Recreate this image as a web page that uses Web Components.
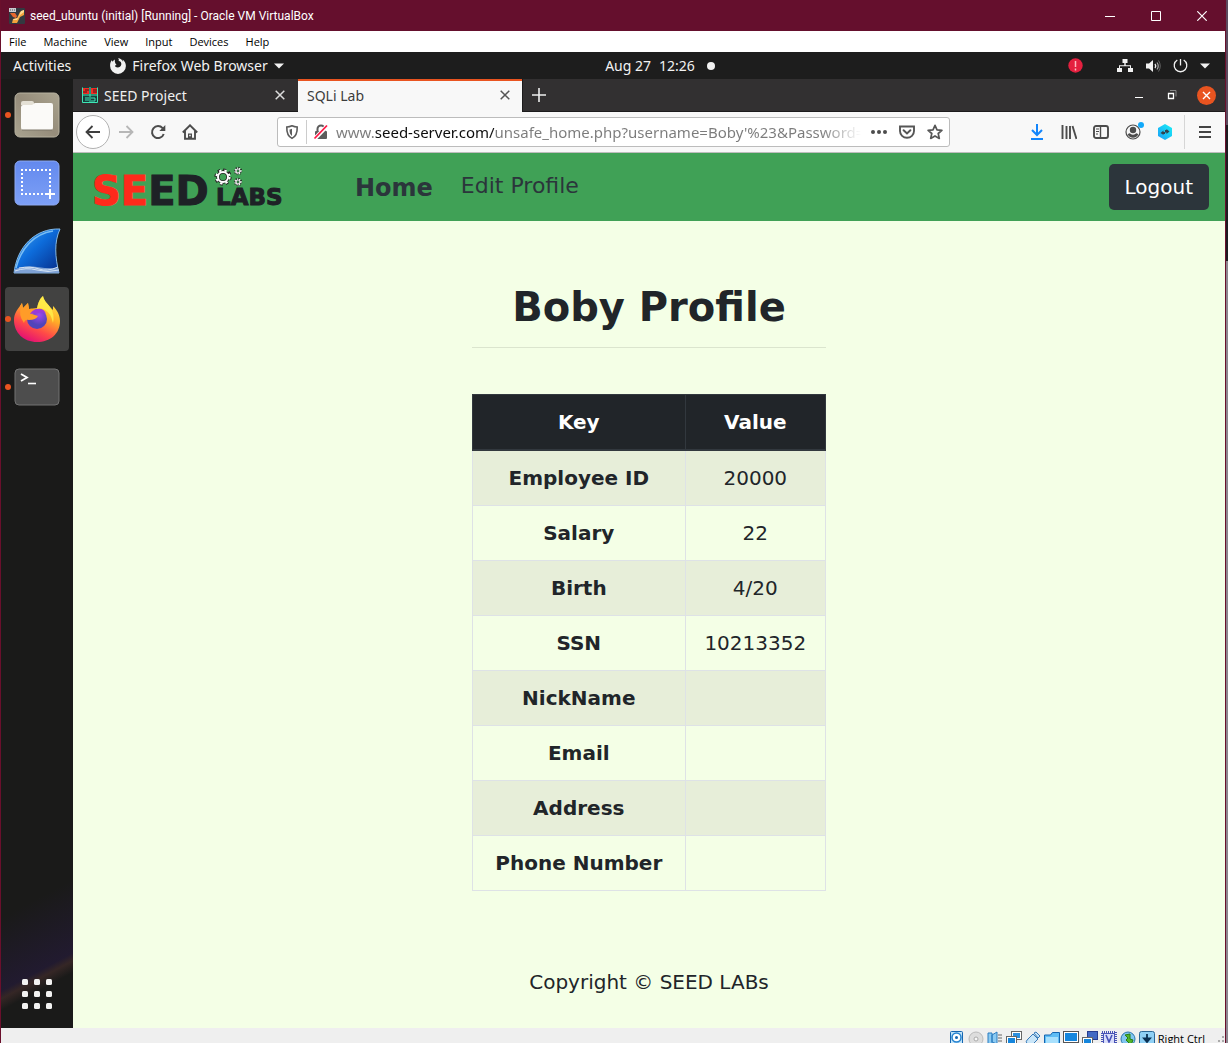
<!DOCTYPE html>
<html lang="en">
<head>
<meta charset="utf-8">
<title>SQLi Lab</title>
<style>
  html, body { margin: 0; height: 100%; }
  body { background: linear-gradient(#5b4a5e 0 12%, #1c1c22 12% 25%, #8d8791 25%); font-family: "Open Sans", "Noto Sans", sans-serif; }
</style>
</head>
<body>
<vm-window>
  <vm-titlebar slot="title">seed_ubuntu (initial) [Running] - Oracle VM VirtualBox</vm-titlebar>
  <vm-menubar slot="menu"></vm-menubar>
  <gnome-desktop>
    <gnome-topbar slot="top"></gnome-topbar>
    <gnome-dock slot="dock"></gnome-dock>
    <firefox-window>
      <firefox-tabs slot="tabs"></firefox-tabs>
      <firefox-toolbar slot="toolbar"></firefox-toolbar>
      <seed-navbar></seed-navbar>
      <seed-profile name="Boby"></seed-profile>
    </firefox-window>
  </gnome-desktop>
  <vm-statusbar slot="status"></vm-statusbar>
</vm-window>
<script>
const BASE = `
  *, *::before, *::after { box-sizing: border-box; }
  :host { display: block; box-sizing: border-box; }
  button { font: inherit; color: inherit; background: none; border: 0; padding: 0; margin: 0; display: flex; align-items: center; justify-content: center; }
  a { color: inherit; text-decoration: none; }
  svg { display: block; flex: none; }
`;
function component(tag, css, html) {
  customElements.define(tag, class extends HTMLElement {
    constructor() {
      super();
      this.attachShadow({ mode: "open" });
      const body = typeof html === "function" ? html(this) : html;
      this.shadowRoot.innerHTML = `<style>${BASE}${css}</style>${body}`;
    }
  });
}

component("vm-window", `
  :host { display: flex; flex-direction: column; height: 100vh; min-height: 1043px; margin-right: 2px; border: solid #6a0f2c; border-width: 0 1px; overflow: hidden; }
  main { flex: 1; min-height: 0; display: flex; flex-direction: column; }
`, `<slot name="title"></slot><slot name="menu"></slot><main><slot></slot></main><slot name="status"></slot>`);

component("vm-titlebar", `
  :host { display: flex; align-items: center; height: 31px; padding-left: 8px; background: #650f2d; color: #fff; }
  .text { flex: 1; padding-left: 5px; white-space: nowrap; font-family: Roboto, sans-serif; font-size: 12px; line-height: 16px; }
  button { width: 46px; height: 31px; }
`, `
  <svg width="16" height="16" viewBox="0 0 16 16"><rect width="16" height="16" rx="1" fill="#333940"/><path d="M0 0h7v4H0z" fill="#c9cbd0"/><path d="M1 2h5" stroke="#555" stroke-dasharray="1 1"/><path d="M1 5h5l2 3-1 2-3-1z" fill="#e8692f"/><path d="M15 2v5l-4 2-3 6H3l1-4 4-1 3-6z" fill="#f4a23c"/><path d="M15 2v2l-4 3-3 5H4l1-1 4-1 3-7z" fill="#ffdb93"/></svg>
  <span class="text"><slot></slot></span>
  <button aria-label="Minimize"><svg width="10" height="10"><path d="M0 5.500h10" stroke="#fff"/></svg></button>
  <button aria-label="Maximize"><svg width="10" height="10"><path d="M.5.5h9v9h-9z" fill="none" stroke="#fff"/></svg></button>
  <button aria-label="Close"><svg width="10" height="10"><path d="M.3.3l9.400 9.400M9.700.3L.3 9.700" stroke="#fff" stroke-width="1.200"/></svg></button>`);

component("vm-menubar", `
  :host { height: 21px; background: #fff; color: #000; }
  nav { display: flex; gap: 17px; padding: 0 8px; font-size: 11px; line-height: 21px; }
`, `<nav>${["File", "Machine", "View", "Input", "Devices", "Help"].map(t => `<button>${t}</button>`).join("")}</nav>`);

component("gnome-desktop", `
  :host { flex: 1; display: flex; flex-direction: column; min-height: 0; }
  .row { flex: 1; display: flex; min-height: 0; }
`, `<slot name="top"></slot><div class="row"><slot name="dock"></slot><slot></slot></div>`);

component("gnome-topbar", `
  :host { display: grid; grid-template-columns: 8fr auto 7fr; align-items: center; height: 27px; padding: 0 12px; background: #1d1d1d; color: #f2f2f2; font-family: "Noto Sans"; font-size: 14px; line-height: 27px; white-space: nowrap; }
  div { display: flex; align-items: center; }
  .app { margin-left: 39px; gap: 6px; }
  .clock { gap: 8px; }
  .right { justify-content: space-between; padding-left: 12px; }
  .tray { gap: 12px; padding-right: 3px; }
  .alert { margin-right: 22px; }
`, `
  <div><button>Activities</button>
    <button class="app">
      <svg width="16" height="16" viewBox="0 0 16 16"><path d="M8 0c1 1 1 2 .6 3 2 .2 3 1.600 2.700 3.500-.3 2-2 3-3.500 3C6 9.500 5 8.500 5 7.500l1.600-.6-1-1.200C5 4.500 4.500 3 5 1.500 3.700 2 3 3 2.800 3.800L1.600 2.200C.4 4 0 6 .1 8a7.900 7.900 0 0 0 15.800 0c0-3-1.300-5-3.400-6.600.5 1 .7 1.600.6 2.300C12 1.500 10.500.3 8 0z" fill="#f2f2f2"/></svg>
      Firefox Web Browser
      <svg width="10" height="6"><path d="M0 .5h10L5 5.500z" fill="#f2f2f2"/></svg>
    </button></div>
  <button class="clock"><span>Aug 27</span><span>12:26</span></button>
  <div class="right"><svg width="8" height="8"><circle cx="4" cy="4" r="4" fill="#f2f2f2"/></svg>
    <div class="tray">
      <svg class="alert" width="15" height="15" viewBox="0 0 15 15"><circle cx="7.500" cy="7.500" r="7.200" fill="#e4203f"/><path d="M7.500 3v6M7.500 10.500v2" stroke="#ffb9c0" stroke-width="1.500"/></svg>
      <svg width="16" height="14" viewBox="0 0 16 14"><path d="M5.500 0h5v4H8.700v2.200H14V9h2v4h-5V9h2V7.200H3V9h2v4H0V9h2V6.200h5.300V4H5.500z" fill="#f2f2f2"/></svg>
      <svg width="16" height="14" viewBox="0 0 16 14"><path d="M1 4.500h3L8 1v12L4 9.500H1z" fill="#f2f2f2"/><path d="M10 5q1.500 2 0 4" fill="none" stroke="#f2f2f2" stroke-width="1.300"/><path d="M12 3.500q2.500 3.500 0 7" fill="none" stroke="#aaa" stroke-width="1.200"/><path d="M13.500 1.500q3.500 5.500 0 11" fill="none" stroke="#666"/></svg>
      <svg width="15" height="15" viewBox="0 0 15 15"><path d="M4.300 2A6.300 6.300 0 1 0 10.700 2M7.500 1v6.500" fill="none" stroke="#f2f2f2" stroke-width="1.300"/></svg>
      <svg width="10" height="6"><path d="M0 .5h10L5 5.500z" fill="#f2f2f2"/></svg>
    </div></div>`);

component("gnome-dock", `
  :host { flex: none; width: 72px; display: flex; flex-direction: column; align-items: center; justify-content: space-between; padding: 4px 4px 2px;
    background: linear-gradient(152deg, transparent 25%, #2b1b4c70 62%, #4a302f90 66%, transparent 72%) bottom / 100% 160px no-repeat, #1a1a19; }
  div { display: flex; flex-direction: column; gap: 4px; }
  button { position: relative; width: 64px; height: 64px; border-radius: 4px; }
  .active { background: #424241; }
  .running::before { content: ""; position: absolute; left: 0; width: 6px; height: 6px; border-radius: 3px; background: #e95420; }
`, `
  <div>
    <button class="running" aria-label="Files"><svg width="46" height="46" viewBox="0 0 46 46"><defs><linearGradient id="f" x1="0" y1="1" x2="1" y2="0"><stop stop-color="#aaa490"/><stop offset=".5" stop-color="#958c7a"/><stop offset="1" stop-color="#aba591"/></linearGradient></defs><rect x="1" y="1" width="44" height="44" rx="5" fill="url(#f)" stroke="#b6b19f"/><path d="M7 13v-2q0-2 2-2h9q2 0 2 2l3 3z" fill="#e4e0d5"/><path d="M7 15q0-2 2-2h9l3-2h16q2 0 2 2v22q0 3-2 3H9q-2 0-2-3z" fill="#fbfaf8"/><path d="M8 38h30" stroke="#7d7768"/></svg></button>
    <button aria-label="Screenshot"><svg width="46" height="46" viewBox="0 0 46 46"><defs><linearGradient id="s" x2="0" y2="1"><stop stop-color="#6389ee"/><stop offset="1" stop-color="#7da0f6"/></linearGradient></defs><rect x="1" y="1" width="44" height="44" rx="5" fill="url(#s)" stroke="#8ea9f2"/><path d="M7 10h30M7 34h24M8 13v20M36 13v16" stroke="#fff" stroke-width="2" stroke-dasharray="2 2"/><path d="M31 34h10M36 29v10" stroke="#fff" stroke-width="2"/></svg></button>
    <button aria-label="Wireshark"><svg width="48" height="46" viewBox="0 0 48 46"><defs><linearGradient id="w" x1="0" x2="1" y2="1"><stop stop-color="#45a5f0"/><stop offset=".45" stop-color="#0d6cdb"/><stop offset="1" stop-color="#062a86"/></linearGradient></defs><path d="M1 45C4 19 22 0 47 1c-6 13-5 28-1 44z" fill="url(#w)" stroke="#85b9e4"/><path d="M3 40C8 20 21 6 40 3" fill="none" stroke="#78bdf4" stroke-width="1.500"/><path d="M2 41q10-4 22-2t21 1l1 5H1z" fill="#7fa2d5"/><path d="M2 43q11-4 22-1t22 0M6 40q12-2 20 1t19-2" fill="none" stroke="#d3e2f4"/></svg></button>
    <button class="running active" aria-label="Firefox"><svg width="48" height="48" viewBox="0 0 48 48"><defs><linearGradient id="x" x1=".8" y1="0" x2=".3" y2="1"><stop stop-color="#fff14a"/><stop offset=".4" stop-color="#ffad27"/><stop offset=".7" stop-color="#ff4b47"/><stop offset="1" stop-color="#e20c77"/></linearGradient><radialGradient id="p" cx=".6" cy=".3"><stop stop-color="#a347ed"/><stop offset="1" stop-color="#5144ba"/></radialGradient></defs><path d="M24 47C11 47 1 38 1 25c0-6 3-10 6-14l2-3 1 5 5-5 1 6 8-1c1-5 3-10 6-12 1 5 4 7 7 11l3 3v-4c4 4 7 9 7 15 0 13-10 21-23 21z" fill="url(#x)"/><circle cx="24" cy="24" r="10" fill="url(#p)"/><path d="M7 11l2-3 1 5 5-5 1 6q5-1 8 2l-5 3 6 2q-2 4-9 4-4-1-5 3-6-8-3-17z" fill="#ff9c28"/><path d="M24 14q7-1 9 5-4-3-8-1l-8 1q2-4 7-5z" fill="#9a3ad8"/><path d="M30 1c1 5 4 7 7 11q5 7 3 16-2-10-8-13-5-3-8-1 1-8 6-13z" fill="#fff04b" opacity=".8"/></svg></button>
    <button class="running" aria-label="Terminal"><svg width="46" height="38" viewBox="0 0 46 38"><rect x="1" y="1" width="44" height="36" rx="4" fill="#4d4d4d" stroke="#737373"/><path d="M7 6l6 3.500L7 13" fill="none" stroke="#fff" stroke-width="1.800"/><path d="M14 15.500h8" stroke="#fff" stroke-width="1.600"/></svg></button>
  </div>
  <button aria-label="Show Applications"><svg width="30" height="30" viewBox="0 0 30 30" fill="#f3f3f2">${[0, 12, 24].map(y => [0, 12, 24].map(x => `<rect x="${x}" y="${y}" width="6" height="6" rx="1.500"/>`).join("")).join("")}</svg></button>`);

component("firefox-window", `
  :host { flex: 1; min-width: 0; display: flex; flex-direction: column; background: #f4ffe6; }
`, `<slot name="tabs"></slot><slot name="toolbar"></slot><slot></slot>`);

const cross = (c) => `<svg width="10" height="10"><path d="M.7.7l8.600 8.600M9.300.7L.7 9.300" stroke="${c}" stroke-width="1.500"/></svg>`;
component("firefox-tabs", `
  :host { display: flex; height: 33px; background: #323031; color: #f0f0f0; font-family: "Noto Sans"; font-size: 14px; }
  .tab { display: flex; align-items: center; width: 225px; padding: 0 13px 0 9px; gap: 6px; border-bottom: 1px solid #1c1b1c; }
  .tab.on { width: 224px; background: #f8f8f8; color: #3c3c3c; border-bottom: 0; border-top: 2px solid #e95420; padding: 0 12px 3px 9px; }
  .tab span { flex: 1; }
  .rest { flex: 1; display: flex; align-items: center; justify-content: space-between; border-bottom: 1px solid #1c1b1c; border-left: 1px solid #1c1b1c; padding: 0 9px; }
  .win { display: flex; align-items: center; gap: 24px; }
  .close { width: 19px; height: 19px; border-radius: 10px; background: #e95420; margin-left: -4px; }
`, `
  <div class="tab"><svg width="16" height="16" viewBox="0 0 16 16"><rect width="16" height="16" fill="#173f3c"/><path d="M1 1h6v6H1zM9 1h6v6H9z" fill="#f02c24"/><path d="M3 3h4M1 5h4M11 3h4M11 5h4" stroke="#4c1516"/><path d="M.5.5v15h15V.500M8 0v16M0 8h16M3 11h4M3 13h4M9 11h4v3H9" fill="none" stroke="#3ee6b5"/></svg><span>SEED Project</span><button aria-label="Close tab">${cross("#ddd")}</button></div>
  <div class="tab on"><span>SQLi Lab</span><button aria-label="Close tab">${cross("#555")}</button></div>
  <div class="rest"><button aria-label="New tab"><svg width="14" height="14"><path d="M0 7h14M7 0v14" stroke="#eee" stroke-width="1.600"/></svg></button>
    <div class="win">
      <button aria-label="Minimize"><svg width="8" height="10"><path d="M0 7.500h8" stroke="#fff"/></svg></button>
      <button aria-label="Restore"><svg width="10" height="10"><path d="M1.500 3.500h5v5h-5z" fill="none" stroke="#fff" stroke-width="1.300"/><path d="M3 .5h6v6" fill="none" stroke="#888"/></svg></button>
      <button class="close" aria-label="Close"><svg width="9" height="9"><path d="M1 1l7 7M8 1L1 8" stroke="#fff" stroke-width="1.400"/></svg></button>
    </div></div>`);

component("firefox-toolbar", `
  :host { display: flex; align-items: center; height: 41px; padding-left: 3px; background: #f8f8f8; border-bottom: 1px solid #bdbdbd; color: #4c4c4c; }
  button { width: 32px; height: 34px; }
  .back { width: 34px; border: 1px solid #b1b1b1; border-radius: 17px; background: #fff; }
  .url { flex: 1; min-width: 0; display: flex; align-items: center; height: 30px; margin: 0 71px; padding-left: 6px; border: 1px solid #bcbcbc; border-radius: 3px; background: #fff; }
  .shield { width: 16px; }
  .lock { width: 28px; height: 24px; margin-left: 6px; border-left: 1px solid #ccc; }
  .url .act { width: 28px; }
  input { flex: 1; min-width: 0; height: 28px; border: 0; padding: 0; margin: 0 4px 0 2px; outline: 0; font: 15px/28px "Noto Sans";
    background: linear-gradient(90deg, #7b7b7b 39px, #0c0c0c 39px 158px, #7b7b7b 158px calc(100% - 40px), #7b7b7b00 100%); -webkit-background-clip: text; background-clip: text; -webkit-text-fill-color: transparent; }
  .menu { border-left: 1px solid #d6d6d6; width: 41px; margin-left: 3px; }
`, `
  <button class="back" aria-label="Back"><svg width="16" height="16" viewBox="0 0 16 16"><path d="M15 8H1.500M7.500 2l-6 6 6 6" fill="none" stroke="#3f3f3f" stroke-width="1.800"/></svg></button>
  <button aria-label="Forward"><svg width="16" height="16" viewBox="0 0 16 16"><path d="M1 8h13.500M8.500 2l6 6-6 6" fill="none" stroke="#b7b7b7" stroke-width="1.800"/></svg></button>
  <button aria-label="Reload"><svg width="16" height="16" viewBox="0 0 16 16"><path d="M12.600 4.200A6 6 0 1 0 13.700 10" fill="none" stroke="#4c4c4c" stroke-width="2"/><path d="M15.300 1v6H9.300z" fill="#4c4c4c"/></svg></button>
  <button aria-label="Home"><svg width="16" height="16" viewBox="0 0 16 16"><path d="M.8 8.500L8 1.300l7.200 7.200M3 7v7.800h10V7" fill="none" stroke="#4c4c4c" stroke-width="1.900"/><path d="M6 15V9.500h4V15z" fill="#4c4c4c"/><path d="M7.200 10.700h1.500v1.500H7.200z" fill="#f8f8f8"/></svg></button>
  <div class="url">
    <button class="shield" aria-label="Tracking protection"><svg width="14" height="16" viewBox="0 0 14 16"><path d="M7 1.800Q4.500 3 1.800 3C1.600 8 2.500 12.200 7 14.400 11.500 12.200 12.400 8 12.200 3Q9.500 3 7 1.800z" fill="none" stroke="#5c5c5c" stroke-width="1.600"/><path d="M7 4.800q-1 .6-2.500.7C4.500 8.500 5 10.700 7 12z" fill="#5c5c5c"/></svg></button>
    <button class="lock" aria-label="Connection is not secure"><svg width="16" height="16" viewBox="0 0 16 16"><path d="M4.500 7V5a3.500 3.500 0 0 1 7 0v2" fill="none" stroke="#5c5c5c" stroke-width="2"/><rect x="2" y="7" width="12" height="8" rx="1" fill="#5c5c5c"/><path d="M1.500 15L14.500 1.500" stroke="#fff" stroke-width="4"/><path d="M1.500 14.500L14 1.500" stroke="#ff1744" stroke-width="1.800"/></svg></button>
    <input type="text" aria-label="Address" value="www.seed-server.com/unsafe_home.php?username=Boby'%23&amp;Password=a">
    <button class="act" aria-label="Page actions"><svg width="16" height="4" fill="#4c4c4c"><circle cx="2" cy="2" r="2"/><circle cx="8" cy="2" r="2"/><circle cx="14" cy="2" r="2"/></svg></button>
    <button class="act" aria-label="Save to Pocket"><svg width="16" height="16" viewBox="0 0 16 16"><path d="M1 2.500h14V7a7 6.800 0 0 1-14 0z" fill="none" stroke="#565656" stroke-width="1.900"/><path d="M4.600 6.300L8 9.500l3.400-3.200" fill="none" stroke="#565656" stroke-width="2" stroke-linecap="round"/></svg></button>
    <button class="act" aria-label="Bookmark"><svg width="16" height="16" viewBox="0 0 16 16"><path d="M8 1.300l2 4.500 4.900.5-3.700 3.200 1.100 4.900L8 11.900l-4.300 2.500 1.100-4.900L1.100 6.300 6 5.800z" fill="none" stroke="#565656" stroke-width="1.700" stroke-linejoin="round"/></svg></button>
  </div>
  <button aria-label="Downloads"><svg width="16" height="16" viewBox="0 0 16 16"><path d="M8 0v11M3 6l5 5 5-5M2 15h12" fill="none" stroke="#1285fb" stroke-width="2"/></svg></button>
  <button aria-label="Library"><svg width="16" height="16" viewBox="0 0 16 16"><path d="M1.500 1v14M5.500 2v13M9 2v13M11.500 2l4 13" stroke="#4c4c4c" stroke-width="1.900"/></svg></button>
  <button aria-label="Sidebars"><svg width="16" height="14" viewBox="0 0 16 14"><rect x="1" y="1" width="14" height="12" rx="2" fill="none" stroke="#4c4c4c" stroke-width="1.900"/><path d="M7.500 1v12" stroke="#4c4c4c" stroke-width="1.400"/><path d="M3 4h3M3 6.500h3M3 9h2" stroke="#4c4c4c"/></svg></button>
  <button aria-label="Account"><svg width="22" height="20" viewBox="0 0 22 20"><circle cx="11" cy="10" r="7" fill="none" stroke="#4c4c4c" stroke-width="1.200"/><circle cx="11" cy="8" r="3.200" fill="#4c4c4c"/><path d="M5.700 12.500q2-2 3-.5 2.300 1.500 4.600 0 1-1.500 3 .5-2 3.200-5.300 3.200t-5.300-3.200z" fill="#4c4c4c"/><circle cx="19" cy="3" r="3" fill="#12a9fa"/></svg></button>
  <button aria-label="Extension"><svg width="16" height="16" viewBox="0 0 16 16"><defs><linearGradient id="e" x1="1" y2="1" x2="0"><stop stop-color="#19f1f5"/><stop offset="1" stop-color="#1b9df8"/></linearGradient></defs><path d="M8 0l7 4v8l-7 4-7-4V4z" fill="url(#e)"/><path d="M3.500 9l3-2.500V8H8v2H6.500v1zM12.500 7.500L9.500 5v1H8v2.500h1.500v1.500z" fill="#31434f"/></svg></button>
  <button class="menu" aria-label="Menu"><svg width="12" height="12"><path d="M0 1h12M0 6h12M0 11h12" stroke="#444" stroke-width="1.800"/></svg></button>`);

const gear = (cx, cy, r, w) => `<g transform="translate(${cx} ${cy})"><circle r="${r + w}" fill="none" stroke="#222" stroke-width="${w * 1.6}" stroke-dasharray="${(r + w) * .39} ${(r + w) * .395}"/><circle r="${r}" fill="none" stroke="#222" stroke-width="${w * 1.8}"/><circle r="${r + w * .8}" fill="none" stroke="#fff" stroke-width="${w}" stroke-dasharray="${(r + w) * .34} ${(r + w) * .43}"/><circle r="${r}" fill="none" stroke="#fff" stroke-width="${w}"/></g>`;
component("seed-logo", `
  :host { width: 198px; height: 60px; }
  text { font-family: "DejaVu Sans"; font-weight: bold; paint-order: stroke; stroke-width: 1px; }
`, `<svg width="198" height="60" viewBox="0 -7 198 60" role="img" aria-label="SEED Labs">
  <text x="0" y="41" font-size="40" fill="#ff2a1b" stroke="#ff2a1b">SE<tspan fill="#1e2126" stroke="#1e2126">ED</tspan></text>
  <text x="124" y="41" font-size="23" fill="#1e2126" stroke="#1e2126">LABS</text>
  ${gear(131, 13, 5, 2)}${gear(146, 7, 2, 1.2)}${gear(146, 18, 2, 1.2)}
</svg>`);

component("seed-navbar", `
  :host { display: flex; align-items: center; height: 68px; padding: 0 16px 0 19px; background: #40a156; color: #2b353b; font-family: "DejaVu Sans", sans-serif; font-size: 22px; }
  nav { flex: 1; display: flex; align-items: flex-start; gap: 28px; margin-left: 65px; padding-top: 2px; }
  a { line-height: 30px; }
  .here { font-size: 24px; font-weight: bold; line-height: 34px; }
  button { height: 46px; padding: 0 16px; background: #2c353b; color: #fff; border-radius: 5px; font-size: 20px; }
`, `<seed-logo></seed-logo><nav><a class="here" href="#">Home</a><a href="#">Edit Profile</a></nav><button>Logout</button>`);

const rows = [["Employee ID", "20000"], ["Salary", "22"], ["Birth", "4/20"], ["SSN", "10213352"], ["NickName", ""], ["Email", ""], ["Address", ""], ["Phone Number", ""]];
component("seed-profile", `
  :host { width: 33.3333%; margin: 0 auto; padding: 62px 15px 0; color: #212529; font-family: "DejaVu Sans", sans-serif; font-size: 20px; line-height: 30px; text-align: center; }
  h1 { margin: 0; font-size: 40px; line-height: 48px; white-space: nowrap; }
  hr { margin: 16px 0 46px; border: 0; border-top: 1px solid rgba(0,0,0,.1); }
  table { width: 100%; border-collapse: collapse; border: 1px solid #dee2e6; }
  th, td { padding: 12px; border: 1px solid #dee2e6; height: 55px; white-space: nowrap; }
  thead th { background: #212529; color: #fff; border-color: #32383e; border-bottom-width: 2px; }
  tbody tr:nth-child(odd) { background: #e7eed9; }
  p { margin: 76px 0 0; }
`, el => `<h1>${el.getAttribute("name")} Profile</h1><hr>
  <table><thead><tr><th scope="col">Key</th><th scope="col">Value</th></tr></thead>
  <tbody>${rows.map(([k, v]) => `<tr><th scope="row">${k}</th><td>${v}</td></tr>`).join("")}</tbody></table>
  <p>Copyright © SEED LABs</p>`);

component("vm-statusbar", `
  :host { display: flex; align-items: flex-start; justify-content: flex-end; height: 15px; padding-top: 3px; background: #efefef; color: #000; font-size: 11px; line-height: 15px; }
  div { display: flex; gap: 3px; }
  span { padding: 0 12px 0 3px; }
`, `<div>
  <svg width="16" height="16"><rect x="1.500" y=".5" width="12" height="15" rx="1" fill="#bfe3fa" stroke="#1565b0"/><circle cx="7.500" cy="6.500" r="4.500" fill="#fff" stroke="#2482d0" stroke-width="1.500"/><circle cx="7.500" cy="6.500" r="1.500" fill="#1565b0"/></svg>
  <svg width="16" height="16"><circle cx="8" cy="8" r="7" fill="#ddd" stroke="#bbb"/><circle cx="8" cy="8" r="2" fill="#f7f7f7" stroke="#aaa"/></svg>
  <svg width="16" height="16"><path d="M1 2h4v11H1zM5 4l5-3v12L5 11z" fill="#8bcaf2" stroke="#2a7cc0"/><path d="M12 3v10M14 3v10" stroke="#666" stroke-dasharray="2 1"/></svg>
  <svg width="16" height="16"><rect x="5.500" y=".5" width="10" height="8" fill="#fff" stroke="#666"/><path d="M7 2h7v5H7z" fill="#2b8fdf"/><rect x=".5" y="5.500" width="10" height="8" fill="#fff" stroke="#666"/><path d="M2 7h7v5H2z" fill="#1586dd"/></svg>
  <svg width="16" height="16"><path d="M9 2l2-1 4 4-2 2zM8 3l5 5-6 6q-3 2-5-1t1-5z" fill="#c9e5f8" stroke="#3679b8"/></svg>
  <svg width="16" height="16"><path d="M.5 4h6l2-2.500h7V14H.5z" fill="#5fbdf5" stroke="#1565b0"/><path d="M2 6h12v7H2z" fill="#a8e0fd"/></svg>
  <svg width="16" height="16"><rect x=".5" y=".5" width="15" height="11" fill="#fff" stroke="#555"/><path d="M2 2h12v8H2z" fill="#1586dd"/></svg>
  <svg width="16" height="16"><rect x="5.500" y=".5" width="10" height="8" fill="#4269c4" stroke="#263c91"/><rect x=".5" y="6.500" width="10" height="8" fill="#fff" stroke="#666"/><path d="M2 8h7v5H2z" fill="#1586dd"/></svg>
  <svg width="16" height="16"><rect x="1" y="1" width="14" height="14" fill="none" stroke="#4853b6" stroke-width="2" stroke-dasharray="1 1"/><rect x="2.500" y="2.500" width="11" height="11" fill="#d9ddfa" stroke="#4853b6"/><path d="M5 4l3 7 3-7" fill="none" stroke="#4550b8" stroke-width="1.600"/></svg>
  <svg width="16" height="16"><circle cx="8" cy="8" r="7" fill="#81c6f1" stroke="#2d76ae"/><path d="M5 4l5-1v5l3 1-2 5-5-5 2-2z" fill="#52b52d" stroke="#287d12"/></svg>
  <svg width="16" height="16"><rect x=".5" y=".5" width="15" height="15" rx="2" fill="#8fd0f5" stroke="#2c6896"/><path d="M8 3v6M5 7.500h6L8 11z" fill="#0b3154" stroke="#0b3154" stroke-width="1.800"/></svg>
  </div><span>Right Ctrl</span>
  <svg width="8" height="12" fill="#aaa"><path d="M5 5h2v2H5zM1 9h2v2H1zM5 9h2v2H5z"/></svg>`);
</script>
</body>
</html>
